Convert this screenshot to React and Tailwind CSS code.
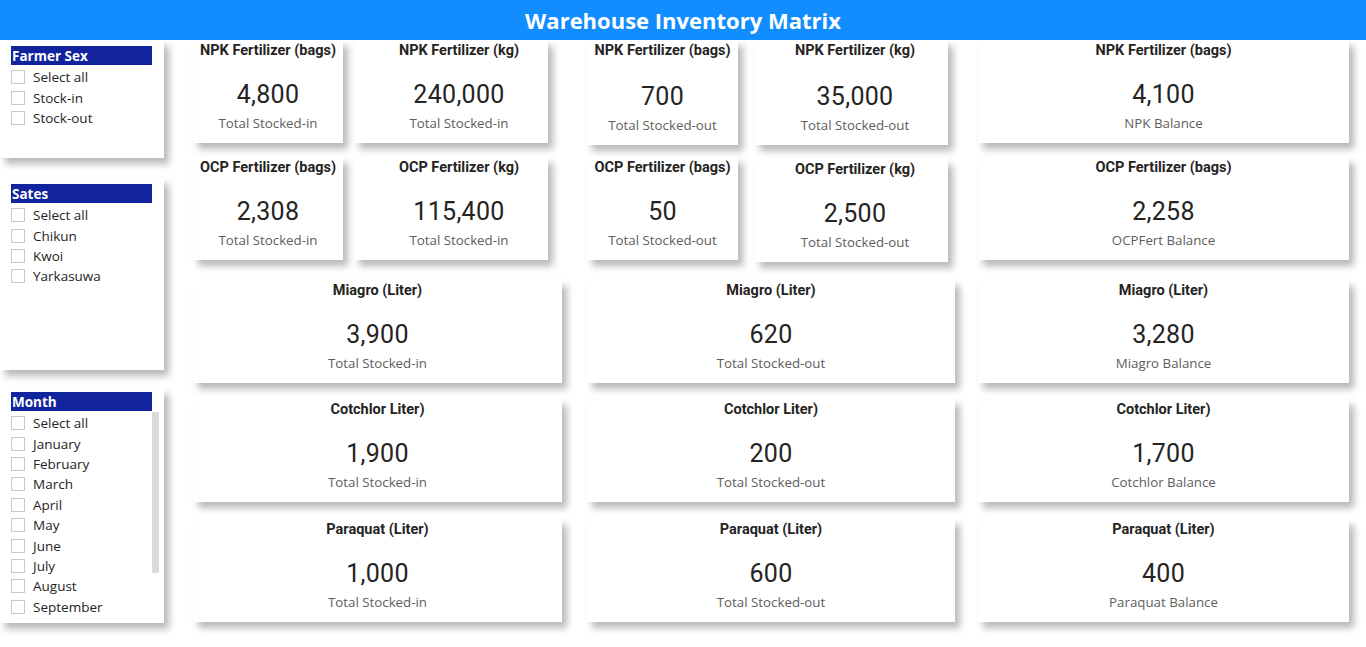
import React from "react";

const shadow = "shadow-[5px_6px_7px_rgba(0,0,0,0.28)]";

function Card({ w, title, value, label, extra = "" }) {
  return (
    <div className={`${w} h-[103px] bg-white ${shadow} flex flex-col items-center shrink-0 pt-[2px] ${extra}`}>
      <div className="font-['Roboto',sans-serif] font-bold text-[14.5px] leading-[18px] text-[#252423]">{title}</div>
      <div className="mt-[20px] font-['Roboto',sans-serif] text-[25px] leading-[30px] text-[#252423] tracking-[0.3px]">{value}</div>
      <div className="mt-[4px] font-['Open_Sans',sans-serif] text-[13.3px] leading-[18px] text-[#605e5c]">{label}</div>
    </div>
  );
}

function Check({ label }) {
  return (
    <div className="flex items-center h-[20.4px]">
      <div className="w-[14px] h-[14px] border border-[#c8c8c8] bg-white shrink-0" />
      <span className="ml-[8px] font-['Open_Sans',sans-serif] text-[13.5px] leading-[18px] text-[#252423]">{label}</span>
    </div>
  );
}

function Slicer({ h, title, items, scroll = false, extra = "" }) {
  return (
    <div className={`relative w-[164px] ${h} bg-white ${shadow} pl-[11px] pt-[6px] ${extra}`}>
      <div className="w-[141px] h-[19px] bg-[#12239e] flex items-center pl-[1px]">
        <span className="font-['Open_Sans',sans-serif] font-bold text-[13.5px] leading-[18px] text-white">{title}</span>
      </div>
      <div className="mt-[2px] flex flex-col">
        {items.map((it) => (
          <Check key={it} label={it} />
        ))}
      </div>
      {scroll && <div className="absolute left-[152px] top-[24px] w-[7px] h-[161px] bg-[#dadada]" />}
    </div>
  );
}

export default function App() {
  return (
    <div className="w-[1366px] h-[647px] bg-white overflow-hidden">
      <div className="h-[40px] bg-[#118dff] flex items-center justify-center">
        <span className="font-['Open_Sans',sans-serif] font-bold text-[22px] leading-[28px] text-white">Warehouse Inventory Matrix</span>
      </div>
      <div className="flex">
        <div className="w-[164px] flex flex-col shrink-0">
          <Slicer h="h-[118px]" title="Farmer Sex" items={["Select all", "Stock-in", "Stock-out"]} />
          <Slicer h="h-[192px]" title="Sates" items={["Select all", "Chikun", "Kwoi", "Yarkasuwa"]} extra="mt-[20px]" />
          <Slicer
            h="h-[235px]"
            title="Month"
            scroll
            items={["Select all", "January", "February", "March", "April", "May", "June", "July", "August", "September"]}
            extra="mt-[18px] !pt-[4px]"
          />
        </div>
        <div className="ml-[29px] flex flex-col">
          <div className="flex items-start">
            <Card w="w-[150px]" title="NPK Fertilizer (bags)" value="4,800" label="Total Stocked-in" />
            <Card w="w-[194px]" title="NPK Fertilizer (kg)" value="240,000" label="Total Stocked-in" extra="ml-[11px] pl-[16px]" />
            <Card w="w-[151px]" title="NPK Fertilizer (bags)" value="700" label="Total Stocked-out" extra="ml-[39px] !h-[105px] [&>div:nth-child(2)]:mt-[22px]" />
            <Card w="w-[193px]" title="NPK Fertilizer (kg)" value="35,000" label="Total Stocked-out" extra="ml-[17px] pl-[7px] !h-[105px] [&>div:nth-child(2)]:mt-[22px]" />
            <Card w="w-[371px]" title="NPK Fertilizer (bags)" value="4,100" label="NPK Balance" extra="ml-[30px]" />
          </div>
          <div className="flex items-start mt-[12px]">
            <Card w="w-[150px]" title="OCP Fertilizer (bags)" value="2,308" label="Total Stocked-in" />
            <Card w="w-[194px]" title="OCP Fertilizer (kg)" value="115,400" label="Total Stocked-in" extra="ml-[11px] pl-[16px]" />
            <Card w="w-[151px]" title="OCP Fertilizer (bags)" value="50" label="Total Stocked-out" extra="ml-[39px]" />
            <Card w="w-[193px]" title="OCP Fertilizer (kg)" value="2,500" label="Total Stocked-out" extra="ml-[17px] pl-[7px] mt-[2px]" />
            <Card w="w-[371px]" title="OCP Fertilizer (bags)" value="2,258" label="OCPFert Balance" extra="ml-[30px]" />
          </div>
          <div className="flex items-start mt-[18px]">
            <Card w="w-[369px]" title="Miagro (Liter)" value="3,900" label="Total Stocked-in" />
            <Card w="w-[368px]" title="Miagro (Liter)" value="620" label="Total Stocked-out" extra="ml-[25px]" />
            <Card w="w-[371px]" title="Miagro (Liter)" value="3,280" label="Miagro Balance" extra="ml-[23px]" />
          </div>
          <div className="flex items-start mt-[16px]">
            <Card w="w-[369px]" title="Cotchlor Liter)" value="1,900" label="Total Stocked-in" />
            <Card w="w-[368px]" title="Cotchlor Liter)" value="200" label="Total Stocked-out" extra="ml-[25px]" />
            <Card w="w-[371px]" title="Cotchlor Liter)" value="1,700" label="Cotchlor Balance" extra="ml-[23px]" />
          </div>
          <div className="flex items-start mt-[17px]">
            <Card w="w-[369px]" title="Paraquat (Liter)" value="1,000" label="Total Stocked-in" />
            <Card w="w-[368px]" title="Paraquat (Liter)" value="600" label="Total Stocked-out" extra="ml-[25px]" />
            <Card w="w-[371px]" title="Paraquat (Liter)" value="400" label="Paraquat Balance" extra="ml-[23px]" />
          </div>
        </div>
      </div>
    </div>
  );
}
